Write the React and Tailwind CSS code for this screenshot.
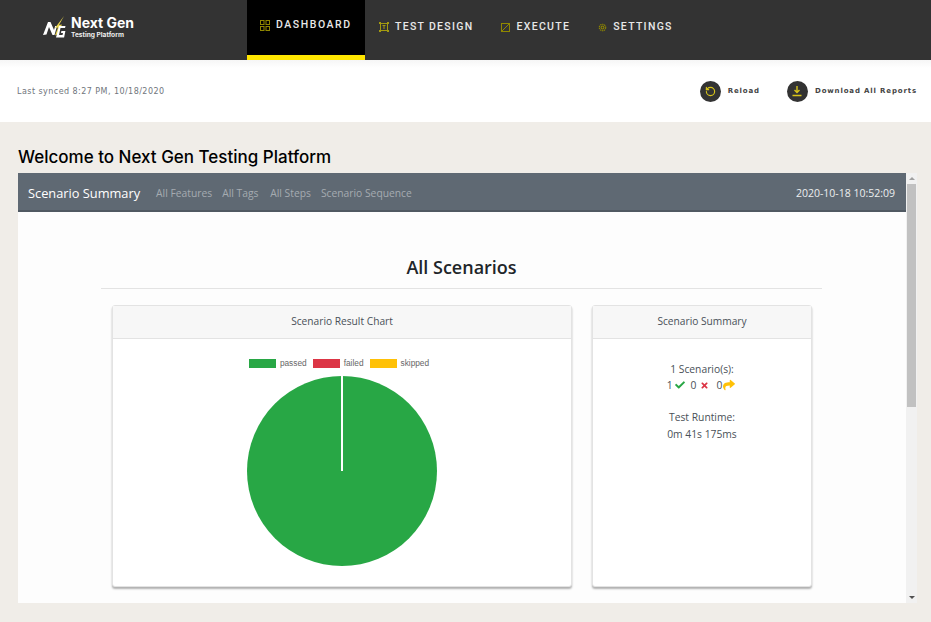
import React from 'react';
import { RotateCcw } from 'lucide-react';
import { FaCheck, FaTimes, FaShare } from 'react-icons/fa';

const sans = 'font-["Open_Sans",sans-serif]';

const NavIcon = ({ type }) => {
  if (type === 'dashboard') {
    return (
      <svg className="shrink-0" width="10" height="11" viewBox="0 0 10 11" fill="none" stroke="#8f8700" strokeWidth="1">
        <rect x="0.5" y="0.5" width="3.5" height="4" />
        <rect x="6" y="0.5" width="3.5" height="4" />
        <rect x="0.5" y="6.5" width="3.5" height="4" />
        <rect x="6" y="6.5" width="3.5" height="4" />
      </svg>
    );
  }
  if (type === 'design') {
    return (
      <svg className="shrink-0" width="10" height="10" viewBox="0 0 10 10" fill="none" stroke="#a39a10" strokeWidth="1">
        <rect x="1.5" y="1.5" width="7" height="7" />
        <rect x="0" y="0" width="2" height="2" fill="#a39a10" stroke="none" />
        <rect x="8" y="0" width="2" height="2" fill="#a39a10" stroke="none" />
        <rect x="0" y="8" width="2" height="2" fill="#a39a10" stroke="none" />
        <rect x="8" y="8" width="2" height="2" fill="#a39a10" stroke="none" />
        <path d="M3.5 3.5h3M5 3.5v3.5" />
      </svg>
    );
  }
  if (type === 'execute') {
    return (
      <svg className="shrink-0 ml-[1px]" width="9" height="9" viewBox="0 0 9 9" fill="none" stroke="#8f8700" strokeWidth="1">
        <rect x="0.5" y="0.5" width="8" height="8" />
        <path d="M1 8L8 1" />
      </svg>
    );
  }
  return (
    <svg className="shrink-0 ml-[1px]" width="9" height="9" viewBox="0 0 10 10" fill="none" stroke="#8f8700" strokeWidth="1.2">
      <circle cx="5" cy="5" r="3.6" strokeDasharray="1.6 0.7" />
      <circle cx="5" cy="5" r="1.6" />
    </svg>
  );
};

const DownloadIcon = () => (
  <svg width="12" height="12" viewBox="0 0 12 12" fill="none" stroke="#d9c51a" strokeWidth="1.4">
    <path d="M6 1v6.5M3.5 5L6 7.5 8.5 5M1.5 10.5h9" />
  </svg>
);

// coordinates are page px minus (43, 15)
const Logo = () => (
  <svg className="shrink-0" width="24" height="24" viewBox="0 0 24 24">
    <path d="M0 20L5 7l2.5 0 3.5 8 1.2-4 1.8 0-2.5 9-2 0-3.5-8-2.5 7.5z" fill="#fff" />
    <path d="M21 1L12 13l3-.5-3 8 2-1 5-10-3 .5z" fill="#e8d44d" />
    <path d="M16 11h6.5l-.5 2h-4.5l-1.5 7h3.5l.5-2h-2l.4-2h4l-1.3 6.5H13z" fill="#fff" />
  </svg>
);

const NavItem = ({ icon, label, active, className }) => (
  <div className={`flex items-center gap-[6px] ${active ? 'bg-black border-b-[5px] border-[#ffe600] pb-[5px] pl-[13px] w-[118px]' : 'pb-[6px]'} ${className || ''}`}>
    <NavIcon type={icon} />
    <span className={`text-[10.5px] font-medium leading-none text-[#e8e8e8] font-['Roboto',sans-serif] whitespace-nowrap ${active ? 'tracking-[1.55px]' : 'tracking-[1.3px]'}`}>
      {label}
    </span>
  </div>
);

const ActionButton = ({ icon, label }) => (
  <div className="flex items-center gap-[7px]">
    <div className="w-[21px] h-[21px] rounded-full bg-[#333] flex items-center justify-center">{icon}</div>
    <span className="text-[7px] font-bold tracking-[0.85px] text-[#444] font-['DejaVu_Sans',sans-serif] pt-[1px]">{label}</span>
  </div>
);

const Card = ({ title, className, children }) => (
  <div className={`h-[282px] bg-white rounded-[3px] border border-[#e3e3e3] shadow-[0_2px_2px_rgba(0,0,0,0.3)] ${className}`}>
    <div className="h-[33px] bg-[#f7f7f7] border-b border-[#e3e3e3] flex items-center justify-center text-[10.2px] text-[#495057]">
      {title}
    </div>
    {children}
  </div>
);

const PieChart = () => (
  <svg width="192" height="192" viewBox="0 0 192 192">
    <circle cx="96" cy="96" r="95" fill="#28a745" />
    <rect x="95" y="1" width="2" height="95" fill="#fff" />
  </svg>
);

const LegendItem = ({ color, label }) => (
  <div className="flex items-center gap-[4px]">
    <span className={`w-[27px] h-[9px] ${color}`} />
    <span className="text-[8.3px] text-[#666] font-['Liberation_Sans',sans-serif]">{label}</span>
  </div>
);

const App = () => {
  return (
    <div className="w-[931px] h-[622px] overflow-hidden bg-[#f0ede8] flex flex-col">
      {/* Top nav */}
      <div className="h-[60px] bg-[#333] flex items-stretch shrink-0">
        <div className="w-[247px] pl-[43px] pt-[15px] flex items-start gap-[4px] shrink-0">
          <Logo />
          <div className="text-white font-['Inter',sans-serif] font-bold">
            <div className="text-[14px] leading-[16px]">Next Gen</div>
            <div className="text-[6.6px] leading-[8px] text-[#eee]">Testing Platform</div>
          </div>
        </div>
        <NavItem icon="dashboard" label="DASHBOARD" active />
        <NavItem icon="design" label="TEST DESIGN" className="ml-[14px]" />
        <NavItem icon="execute" label="EXECUTE" className="ml-[27px]" />
        <NavItem icon="settings" label="SETTINGS" className="ml-[27px]" />
      </div>

      {/* Sync bar */}
      <div className="h-[62px] bg-white flex items-center justify-between pl-[17px] pr-[14px] shrink-0 bg-gradient-to-b from-[#f6f6f6] to-white to-[8px]">
        <span className="text-[8px] tracking-[0.45px] text-[#70757c] font-['DejaVu_Sans',sans-serif] pt-[1px]">Last synced 8:27 PM, 10/18/2020</span>
        <div className="flex items-center gap-[27px]">
          <ActionButton icon={<RotateCcw size={11} color="#d9c51a" strokeWidth={2.5} />} label="Reload" />
          <ActionButton icon={<DownloadIcon />} label="Download All Reports" />
        </div>
      </div>

      <h1 className="mt-[24px] ml-[18px] text-[17px] leading-[22px] font-[450] text-black font-['Inter',sans-serif] shrink-0">
        Welcome to Next Gen Testing Platform
      </h1>

      {/* Report frame */}
      <div className="mt-[5px] ml-[18px] w-[899px] h-[430px] flex overflow-hidden shrink-0">
        <div className={`w-[888px] bg-[#fdfdfd] overflow-hidden ${sans}`}>
          <div className="h-[39px] bg-[#5f6973] border-b-2 border-[#505962] flex items-center pl-[10px] pr-[11px] pt-[4px]">
            <span className="text-[12.8px] text-white mr-[16px]">Scenario Summary</span>
            <div className="flex gap-[10px] text-[10.3px] text-[#a5abb1]">
              <span>All Features</span>
              <span className="w-[38px]">All Tags</span>
              <span>All Steps</span>
              <span>Scenario Sequence</span>
            </div>
            <span className="ml-auto text-[10.5px] text-[#eceeef]">2020-10-18 10:52:09</span>
          </div>

          <div className="mx-[83px] w-[721px] mt-[41px]">
            <h2 className="text-center text-[18px] leading-[28px] font-semibold text-[#212529] pb-[7px] border-b border-[#e3e3e3]">All Scenarios</h2>
          </div>

          <div className="flex ml-[94px] mt-[16px] gap-[20px]">
            <Card title="Scenario Result Chart" className="w-[460px]">
              <div className="flex justify-center gap-[6px] mt-[18px] mb-[6px] pr-[6px]">
                <LegendItem color="bg-[#28a745]" label="passed" />
                <LegendItem color="bg-[#dc3545]" label="failed" />
                <LegendItem color="bg-[#ffc107]" label="skipped" />
              </div>
              <div className="flex justify-center">
                <PieChart />
              </div>
            </Card>

            <Card title="Scenario Summary" className="w-[220px]">
              <div className="text-center text-[10.3px] leading-[16px] text-[#495057] pt-[22px]">
                <div>1 Scenario(s):</div>
                <div className="flex items-center justify-center pr-[2px]">
                  <span>1</span>
                  <FaCheck size={10} className="text-[#28a745] ml-[2px] mr-[6px]" />
                  <span>0</span>
                  <FaTimes size={9} className="text-[#dc3545] ml-[4px] mr-[7px]" />
                  <span>0</span>
                  <FaShare size={12} className="text-[#ffc107] ml-[1px]" />
                </div>
                <div className="mt-[16px]">Test Runtime:</div>
                <div className="mt-[1px]">0m 41s 175ms</div>
              </div>
            </Card>
          </div>
        </div>

        {/* Scrollbar */}
        <div className="w-[11px] bg-[#f1f1f1] flex flex-col items-center">
          <span className="h-[11px] flex items-center justify-center">
            <span className="w-0 h-0 border-x-[3px] border-x-transparent border-b-[3px] border-b-[#a0a0a0]" />
          </span>
          <div className="w-[9px] h-[223px] bg-[#c1c1c1]" />
          <span className="mt-auto h-[11px] flex items-center justify-center">
            <span className="w-0 h-0 border-x-[3px] border-x-transparent border-t-[3px] border-t-[#505050]" />
          </span>
        </div>
      </div>
    </div>
  );
};

export default App;
